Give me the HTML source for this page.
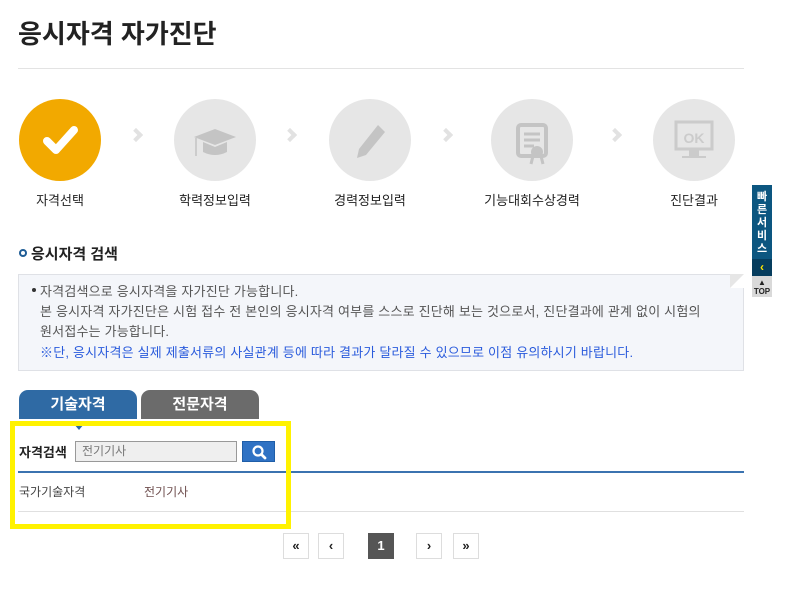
<!DOCTYPE html><html><head><meta charset="utf-8"><style>
*{margin:0;padding:0;box-sizing:border-box}
body{width:798px;height:613px;background:#fff;font-family:"Liberation Sans","Noto Sans CJK KR",sans-serif;color:#222;position:relative;overflow:hidden}
.a{position:absolute}
.c{position:absolute;width:82px;height:82px;border-radius:50%;background:#e6e6e6;top:99px}
.lbl{position:absolute;top:190px;font-size:13px;width:140px;text-align:center;color:#222}
.arr{position:absolute;top:130px;width:10px;height:10px;border-right:4px solid #e2e2e2;border-top:4px solid #e2e2e2;transform:rotate(45deg)}
.pg{position:absolute;top:533px;width:26px;height:26px;border:1px solid #ddd;background:#fff;font-size:13px;font-weight:bold;text-align:center;line-height:24px;color:#222}
.t{font-size:13px;letter-spacing:0.2px;color:#555;position:absolute;left:40px}
</style></head><body>
<div class="a" style="left:18px;top:14px;font-size:26px;font-weight:bold;color:#222">응시자격 자가진단</div>
<div class="a" style="left:18px;top:68px;width:726px;height:1px;background:#e3e3e3"></div>

<div class="c" style="left:19px;background:#f2a900"><svg width="82" height="82" viewBox="0 0 82 82"><path d="M28 42 L37 51 L55 31" stroke="#fff" stroke-width="8" fill="none" stroke-linecap="round" stroke-linejoin="round"/></svg></div>
<div class="arr" style="left:131px"></div>
<div class="c" style="left:174px"><svg width="82" height="82" viewBox="0 0 82 82"><path d="M20 38 L41 30 L62 38 L41 46Z" fill="#c4c4c4"/><path d="M29 43 V53 Q41 59 53 53 V43 L41 48Z" fill="#c4c4c4"/><path d="M22 39 V57" stroke="#c4c4c4" stroke-width="1.5"/></svg></div>
<div class="arr" style="left:285px"></div>
<div class="c" style="left:329px"><svg width="82" height="82" viewBox="0 0 82 82"><path d="M49 26 L56 33 L37 56 L28 59 L30 50Z" fill="#c4c4c4"/></svg></div>
<div class="arr" style="left:441px"></div>
<div class="c" style="left:491px"><svg width="82" height="82" viewBox="0 0 82 82"><rect x="27" y="26" width="28" height="31" rx="3" fill="none" stroke="#c4c4c4" stroke-width="4"/><path d="M33 35H49M33 41H49M33 47H43" stroke="#c4c4c4" stroke-width="3"/><circle cx="46" cy="53" r="6" fill="#c4c4c4"/><path d="M42 57 L40 65 M50 57 L52 65" stroke="#c4c4c4" stroke-width="3"/></svg></div>
<div class="arr" style="left:610px"></div>
<div class="c" style="left:653px"><svg width="82" height="82" viewBox="0 0 82 82"><rect x="23" y="23" width="36" height="27" fill="none" stroke="#cbcbcb" stroke-width="3"/><text x="41" y="44" font-family="Liberation Sans" font-weight="bold" font-size="14" fill="#cbcbcb" text-anchor="middle">OK</text><path d="M37 52H45V56H37Z M29 58H53" stroke="#cbcbcb" stroke-width="2" fill="#cbcbcb"/></svg></div>

<div class="lbl" style="left:-10px">자격선택</div>
<div class="lbl" style="left:145px">학력정보입력</div>
<div class="lbl" style="left:300px">경력정보입력</div>
<div class="lbl" style="left:462px">기능대회수상경력</div>
<div class="lbl" style="left:624px">진단결과</div>

<div class="a" style="left:19px;top:249px;width:8px;height:8px;border:2px solid #1f5d96;border-radius:50%"></div>
<div class="a" style="left:31px;top:243px;font-size:15px;font-weight:bold;color:#222">응시자격 검색</div>
<div class="a" style="left:18px;top:274px;width:726px;height:97px;background:#f4f6fa;border:1px solid #dfe1e6"></div>
<div class="a" style="left:730px;top:274px;width:0;height:0;border-left:14px solid #e6e6e6;border-bottom:14px solid #fff"></div>
<div class="a" style="left:32px;top:288px;width:4px;height:4px;background:#333;border-radius:50%"></div>
<div class="t" style="top:281px">자격검색으로 응시자격을 자가진단 가능합니다.</div>
<div class="t" style="top:301px">본 응시자격 자가진단은 시험 접수 전 본인의 응시자격 여부를 스스로 진단해 보는 것으로서, 진단결과에 관계 없이 시험의</div>
<div class="t" style="top:321px">원서접수는 가능합니다.</div>
<div class="t" style="top:342px;color:#2a5bdc">※단, 응시자격은 실제 제출서류의 사실관계 등에 따라 결과가 달라질 수 있으므로 이점 유의하시기 바랍니다.</div>

<div class="a" style="left:19px;top:390px;width:118px;height:29px;background:#2f6aa4;border-radius:9px 9px 0 0;color:#fff;font-weight:bold;font-size:15px;text-align:center;line-height:29px">기술자격</div>
<div class="a" style="left:141px;top:390px;width:118px;height:29px;background:#6b6b6b;border-radius:9px 9px 0 0;color:#fff;font-weight:bold;font-size:15px;text-align:center;line-height:29px">전문자격</div>
<div class="a" style="left:74px;top:424px;border-left:5px solid transparent;border-right:5px solid transparent;border-top:6px solid #2f6aa4"></div>

<div class="a" style="left:19px;top:442px;font-size:13px;font-weight:bold">자격검색</div>
<div class="a" style="left:75px;top:441px;width:162px;height:21px;background:#efefef;border:1px solid #999;font-size:12px;color:#777;padding-left:6px;line-height:19px">전기기사</div>
<div class="a" style="left:242px;top:441px;width:33px;height:21px;background:#2f72c4;border:1px solid #1f5ea8"><svg width="33" height="21" viewBox="0 0 33 21"><circle cx="15" cy="9" r="4.5" stroke="#fff" stroke-width="2.2" fill="none"/><path d="M18.5 12.5 L22 16" stroke="#fff" stroke-width="2.8" stroke-linecap="round"/></svg></div>
<div class="a" style="left:18px;top:471px;width:726px;height:2px;background:#3b73b0"></div>
<div class="a" style="left:19px;top:483px;font-size:12px;color:#444">국가기술자격</div>
<div class="a" style="left:144px;top:483px;font-size:12px;color:#705050">전기기사</div>
<div class="a" style="left:18px;top:511px;width:726px;height:1px;background:#e0e0e0"></div>
<div class="a" style="left:10px;top:421px;width:281px;height:108px;border:5px solid #fff200"></div>

<div class="pg" style="left:283px">«</div>
<div class="pg" style="left:318px">‹</div>
<div class="pg" style="left:368px;background:#555;border-color:#555;color:#fff">1</div>
<div class="pg" style="left:416px">›</div>
<div class="pg" style="left:453px">»</div>

<div class="a" style="left:752px;top:185px;width:20px;height:74px;background:#0c5680;color:#fff;font-size:11px;font-weight:bold;text-align:center;line-height:13px;padding-top:6px">빠<br>른<br>서<br>비<br>스</div>
<div class="a" style="left:752px;top:259px;width:20px;height:17px;background:#063d5e;color:#ffe600;font-size:12px;font-weight:bold;text-align:center;line-height:17px">‹</div>
<div class="a" style="left:752px;top:276px;width:20px;height:21px;background:#d9d9d9;color:#222;font-size:8px;font-weight:bold;text-align:center;line-height:9px;padding-top:2px">▲<br>TOP</div>
</body></html>
